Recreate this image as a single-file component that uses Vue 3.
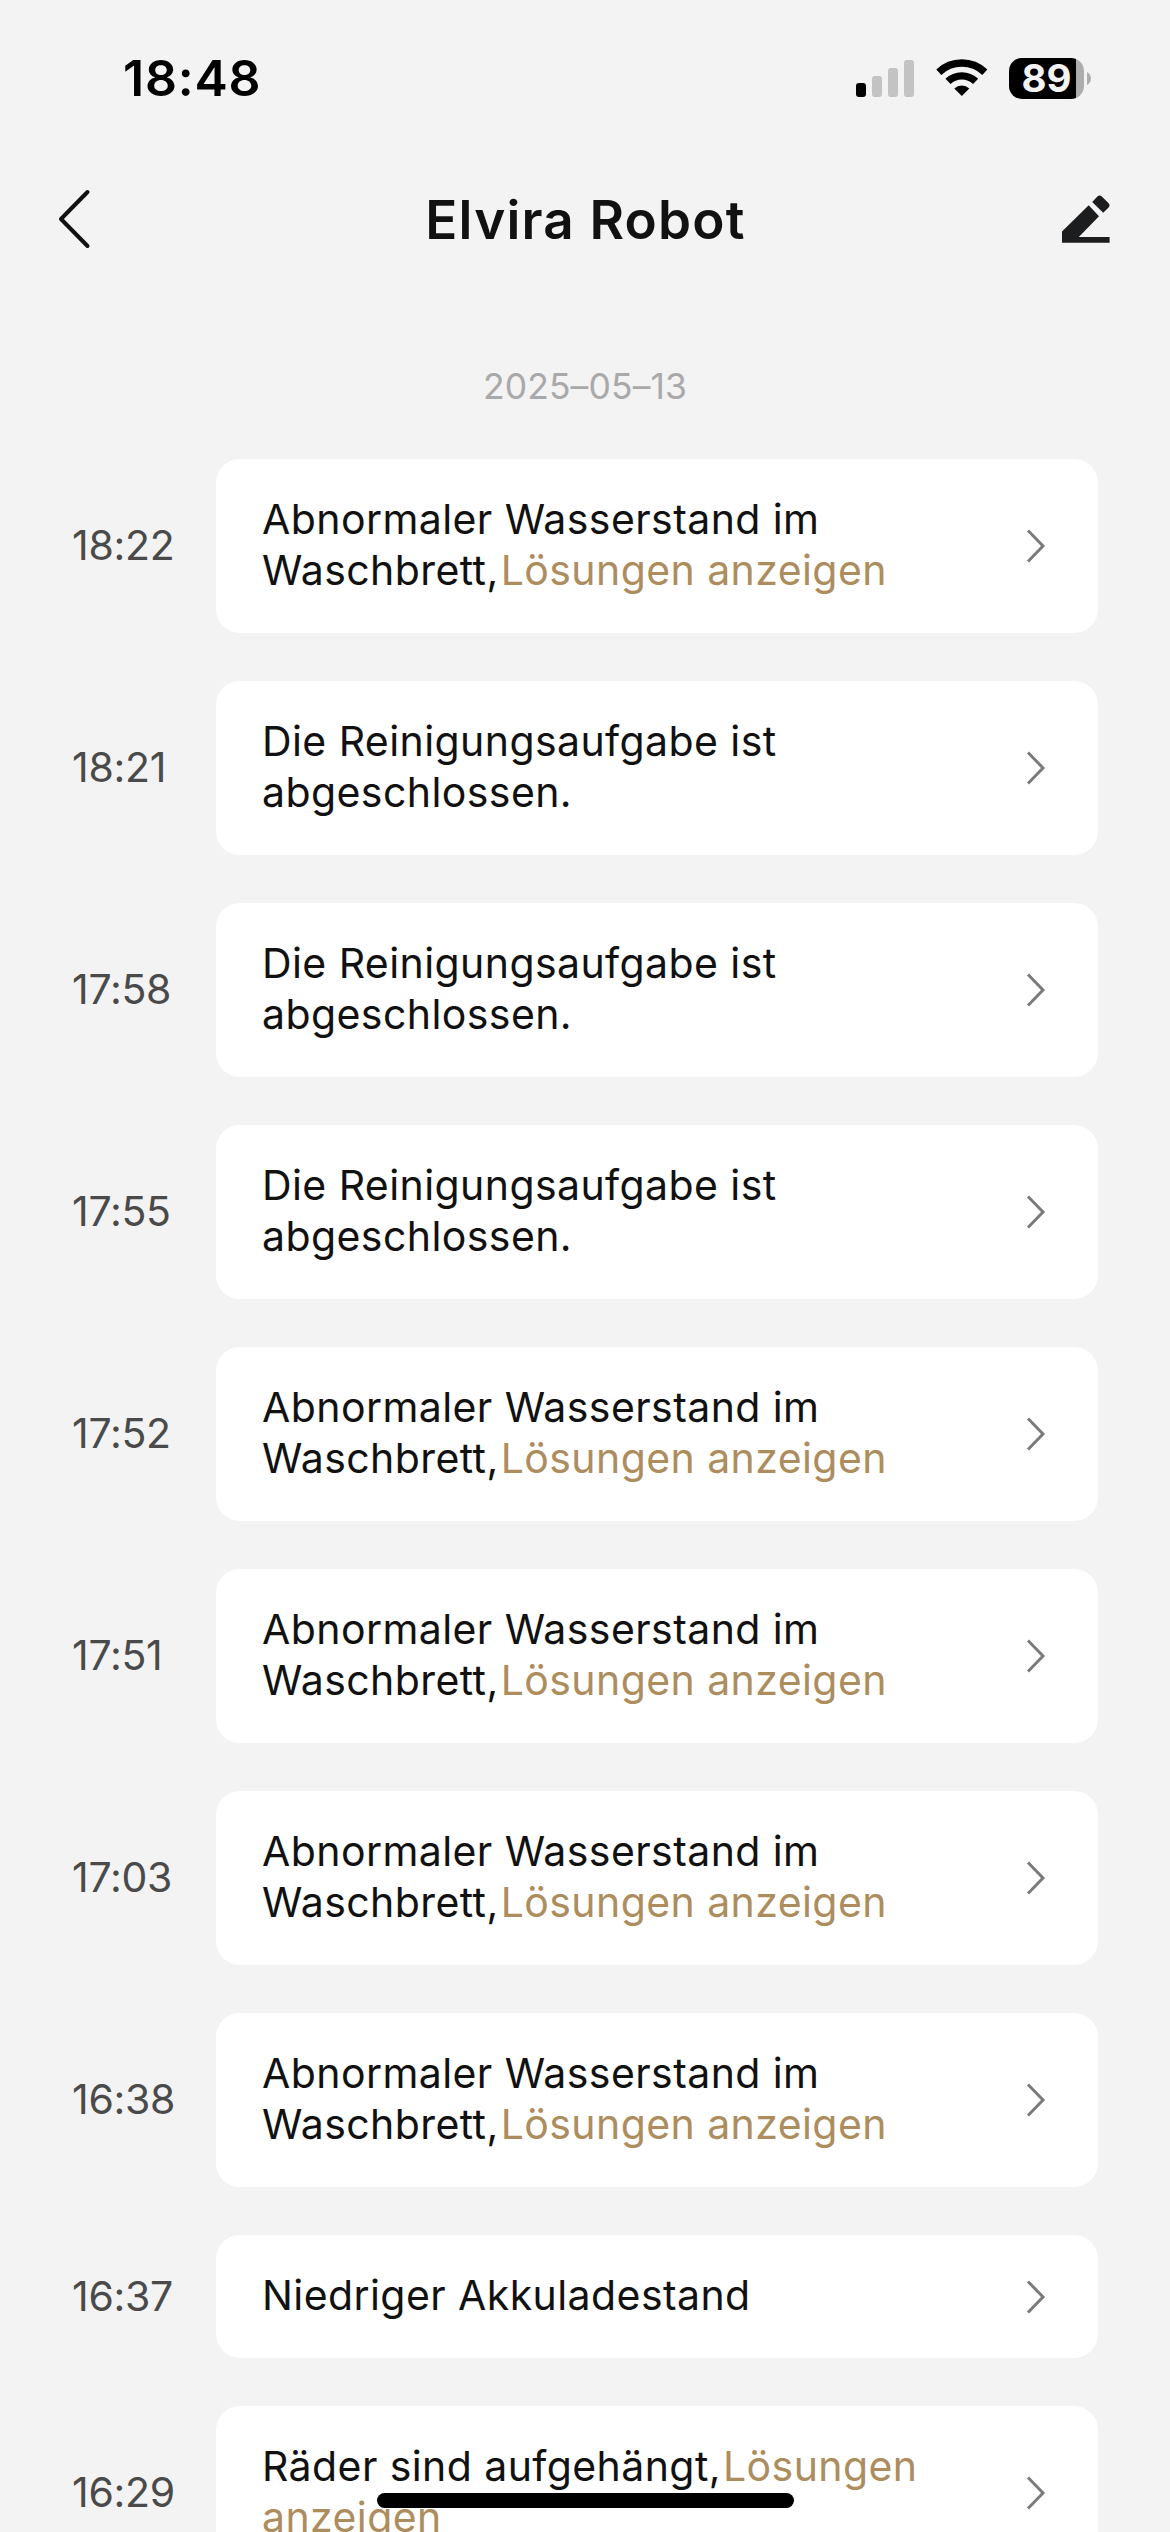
<script setup>
const solution = 'Lösungen anzeigen'
const water = 'Abnormaler Wasserstand im Waschbrett,'
const done = 'Die Reinigungsaufgabe ist abgeschlossen.'

const events = [
  { time: '18:22', text: water, link: solution },
  { time: '18:21', text: done },
  { time: '17:58', text: done },
  { time: '17:55', text: done },
  { time: '17:52', text: water, link: solution },
  { time: '17:51', text: water, link: solution },
  { time: '17:03', text: water, link: solution },
  { time: '16:38', text: water, link: solution },
  { time: '16:37', text: 'Niedriger Akkuladestand' },
  { time: '16:29', text: 'Räder sind aufgehängt,', link: solution },
]
</script>

<template>
  <div class="screen">
    <div class="status">
      <span class="clock">18:48</span>
      <div class="indicators">
        <svg class="signal" width="58" height="37" viewBox="0 0 58 37">
          <rect x="0" y="23" width="10" height="14" rx="3" fill="#000" />
          <rect x="16" y="16" width="10" height="21" rx="3" fill="#c3c3c3" />
          <rect x="32" y="8" width="10" height="29" rx="3" fill="#c3c3c3" />
          <rect x="48" y="0" width="10" height="37" rx="3" fill="#c3c3c3" />
        </svg>
        <svg class="wifi" width="52" height="38" viewBox="0 0 52 38">
          <g fill="none" stroke="#000" stroke-width="7.4">
            <path d="M2.8 13.2 A33.5 33.5 0 0 1 48.8 13.2" />
            <path d="M12 22.4 A20 20 0 0 1 39.6 22.4" />
          </g>
          <path d="M25.8 37 L18.3 29.4 A11.2 11.2 0 0 1 33.3 29.4 Z" fill="#000" />
        </svg>
        <div class="battery"><span>89</span></div>
        <svg class="nub" width="4" height="13" viewBox="0 0 4 13">
          <path d="M0 0 C5.3 3 5.3 10 0 13 Z" fill="#adadad" />
        </svg>
      </div>
    </div>

    <header class="bar">
      <svg class="back" width="36" height="62" viewBox="0 0 36 62">
        <path d="M31.5 4 L5 31 L31.5 58" fill="none" stroke="#111" stroke-width="4" stroke-linecap="round" stroke-linejoin="round" />
      </svg>
      <h1>Elvira Robot</h1>
      <svg class="edit" width="48" height="48" viewBox="0 0 48 48">
        <path d="M0 36.4 L26.7 10.3 L37 21.3 L16.8 42 H47.6 V47.7 H0 Z M30.2 7 L35.4 1.6 Q37.6 -0.6 39.8 1.6 L46.4 8 Q48.6 10.2 46.6 12.4 L41.2 17.8 Z" fill="#1b1d1f" />
      </svg>
    </header>

    <p class="date">2025–05–13</p>

    <ul class="list">
      <li v-for="event in events" :key="event.time" class="row">
        <time>{{ event.time }}</time>
        <div class="card">
          <p>{{ event.text }}<span v-if="event.link" class="link">{{ event.link }}</span></p>
          <svg width="20" height="36" viewBox="0 0 20 36">
            <path d="M2 2.5 L17 18 L2 33.5" fill="none" stroke="#7b7b7b" stroke-width="3" />
          </svg>
        </div>
      </li>
    </ul>

    <div class="home"></div>
  </div>
</template>

<style>
body {
  background: #f3f3f3;
}
</style>

<style scoped>
.screen {
  position: relative;
  display: flex;
  flex-direction: column;
  width: 1170px;
  height: 2532px;
  overflow: hidden;
  background: #f3f3f3;
  font-family: Inter, "Liberation Sans", sans-serif;
}
.status {
  display: flex;
  flex: none;
  justify-content: space-between;
  align-items: center;
  height: 156px;
  padding: 0 79px 0 123px;
  box-sizing: border-box;
}
.clock {
  font-size: 50px;
  font-weight: 600;
  line-height: 60px;
  letter-spacing: 0.8px;
  color: #000;
}
.indicators {
  display: flex;
  align-items: center;
}
.wifi {
  margin-left: 22px;
}
.battery {
  display: flex;
  justify-content: center;
  width: 75px;
  height: 41px;
  margin-left: 21px;
  border-radius: 13px;
  background: linear-gradient(90deg, #000 67px, #adadad 67px);
  color: #f3f3f3;
  font-size: 38.5px;
  font-weight: 700;
  line-height: 41px;
}
.nub {
  margin-left: 3px;
}
.bar {
  display: grid;
  grid-template-columns: 1fr auto 1fr;
  flex: none;
  align-items: center;
  height: 126px;
  padding: 0 60px 0 56px;
}
.edit {
  justify-self: end;
}
h1 {
  margin: 0 -5px 0 0;
  padding-top: 1px;
  color: #111;
  font-size: 53px;
  font-weight: 600;
  line-height: 64px;
  letter-spacing: 1.2px;
}
.date {
  margin: 83px 0 0;
  text-align: center;
  color: #a9a9a9;
  font-size: 35.5px;
  font-weight: 400;
  line-height: 44px;
  letter-spacing: 0.1px;
}
.list {
  display: flex;
  flex-direction: column;
  gap: 48px;
  margin: 50px 72px 0;
  padding: 0;
  list-style: none;
}
.row {
  display: flex;
  align-items: center;
}
time {
  flex: none;
  width: 144px;
  padding-bottom: 2px;
  color: #4a4a4a;
  font-size: 41px;
  font-weight: 400;
  line-height: 50px;
  letter-spacing: -0.3px;
}
.card {
  display: flex;
  flex: 1;
  justify-content: space-between;
  align-items: center;
  padding: 36px 52px 36px 46px;
  border-radius: 24px;
  background: #fff;
}
.card p {
  width: 720px;
  margin: -1px 0 1px;
  color: #111;
  font-size: 41px;
  line-height: 51px;
  letter-spacing: 0.42px;
}
.card .link {
  margin-left: 2px;
  color: #ad8d5e;
}
.home {
  position: absolute;
  left: 377px;
  top: 2493px;
  width: 417px;
  height: 15px;
  border-radius: 8px;
  background: #000;
}
</style>
